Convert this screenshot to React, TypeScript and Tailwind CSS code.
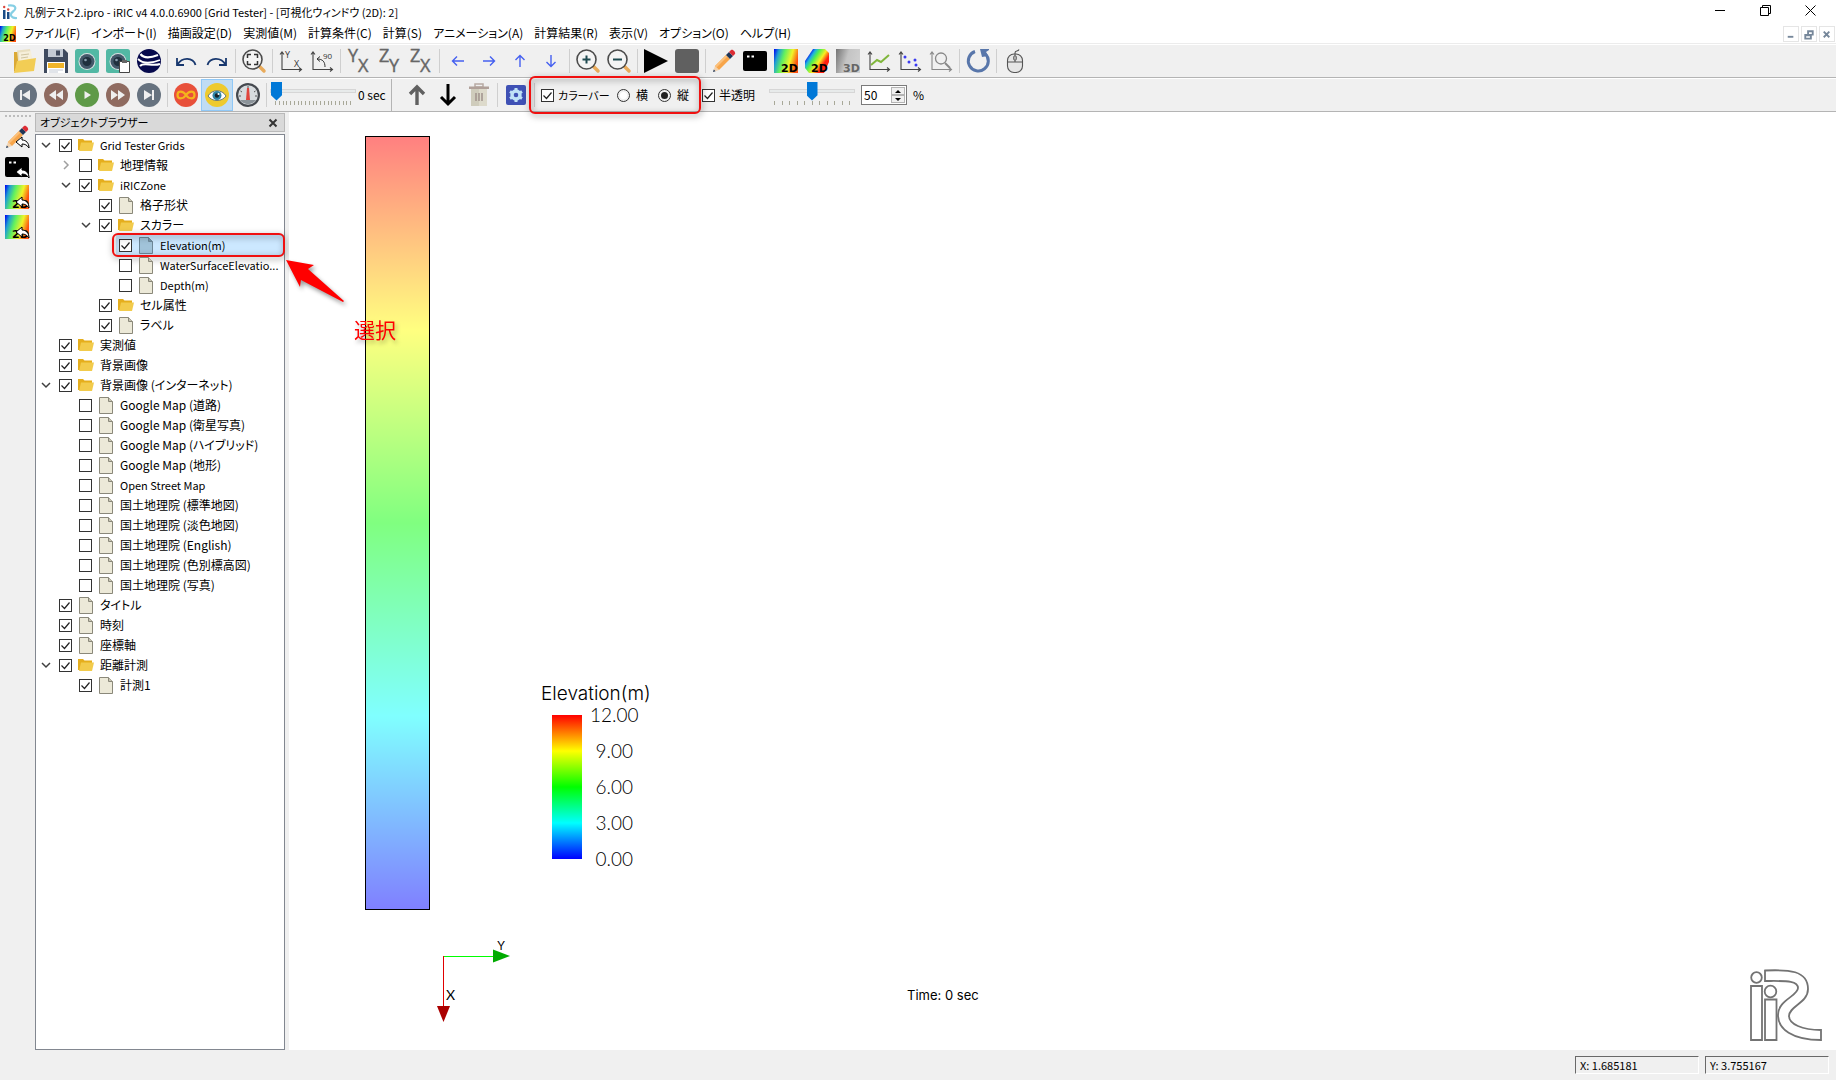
import React, { useState } from 'react';

type IconProps = { children: React.ReactNode; size?: string };

const Svg = ({ children, size = 'size-6' }: IconProps) => (
  <svg viewBox="0 0 24 24" className={`${size} shrink-0 overflow-visible`} aria-hidden="true">
    {children}
  </svg>
);

/* ---------- Icons ---------- */

const FolderBig = () => (
  <Svg>
    <path d="M1 3h6l1 2v17H1z" fill="#dba935" />
    <path d="M4 1.500 17 0l3 18-14 3z" fill="#e9dfc0" />
    <path d="M6 3.500 18 2l2 17-13 2z" fill="#f6efda" />
    <path d="M8 6l8-1M8 9l7-1" stroke="#cfc4a0" strokeWidth="1" />
    <path d="M4 12 23 9l-2 13L1 24z" fill="#f2cd55" />
    <path d="M4 12 1 24 1 22z" fill="#e0b03a" />
  </Svg>
);

const SaveIcon = () => (
  <Svg>
    <path d="M0 0h20l4 4v20H0z" fill="#3f4a5e" />
    <path d="M4 0h15v8H4z" fill="#c3cad4" />
    <path d="M12 1.500h4v5h-4z" fill="#3f4a5e" />
    <path d="M3 13h18v11H3z" fill="#fff" />
    <path d="M4 14h16v5H4z" fill="#f0b429" />
    <path d="M5 21h14M5 23h9" stroke="#c3cad4" />
  </Svg>
);

const CameraBody = () => (
  <>
    <rect width="24" height="24" rx="2.500" fill="#52b8a4" />
    <circle cx="12" cy="12.500" r="8.500" fill="#d9e0e2" />
    <circle cx="12" cy="12.500" r="7.500" fill="#44586a" />
    <circle cx="12" cy="12.500" r="4.500" fill="#20303e" />
    <circle cx="10.500" cy="11" r="1.300" fill="#8ba0b0" />
  </>
);

const CameraIcon = () => (
  <Svg>
    <CameraBody />
  </Svg>
);

const CameraClipIcon = () => (
  <Svg>
    <CameraBody />
    <path d="M13.500 12.500h10v11h-10z" fill="#fff" stroke="#454545" />
    <path d="M16 11h5v3h-5z" fill="#666" />
  </Svg>
);

const GlobeIcon = () => (
  <Svg>
    <circle cx="12" cy="12" r="12" fill="#070a4d" />
    <g fill="none" stroke="#fff">
      <path d="M3.500 5C6 8.500 12 9.500 21 6" strokeWidth="2.200" />
      <path d="M1 10c5 5 12 5 22 1" strokeWidth="1.800" />
      <path d="M3 17c4-4.500 12 1 20-2" strokeWidth="2" />
    </g>
  </Svg>
);

const UndoIcon = () => (
  <Svg>
    <path d="M3 9v7h7M3.500 15.500C8 8 19 8 21.500 16" fill="none" stroke="#17376e" strokeWidth="1.800" />
  </Svg>
);

const RedoIcon = () => (
  <Svg>
    <path d="M21 9v7h-7M20.500 15.500C16 8 5 8 2.500 16" fill="none" stroke="#17376e" strokeWidth="1.800" />
  </Svg>
);

const Lens = ({ children }: { children: React.ReactNode }) => (
  <Svg>
    <path d="M17 17l5 5" stroke="#e9ab5b" strokeWidth="3.500" strokeLinecap="round" />
    <circle cx="10.500" cy="10.500" r="9.500" fill="#f4f4f4" stroke="#4c4c4c" strokeWidth="1.600" />
    {children}
  </Svg>
);

const ZoomFitIcon = () => (
  <Lens>
    <path d="M5.500 9V5.500H9M12 5.500h3.500V9M15.500 12v3.500H12M9 15.500H5.500V12" fill="none" stroke="#333" strokeWidth="1.500" />
  </Lens>
);

const ZoomInIcon = () => (
  <Lens>
    <path d="M6.500 10.500h8M10.500 6.500v8" stroke="#1f4a50" strokeWidth="2" />
  </Lens>
);

const ZoomOutIcon = () => (
  <Lens>
    <path d="M6 10.500h9" stroke="#1f4a50" strokeWidth="2" />
  </Lens>
);

const AxisLines = ({ color = '#444' }: { color?: string }) => (
  <path d="M3 3v17.500h19M1 5.500 3 3l2 2.500M20 18.500l2.500 2-2.500 2" fill="none" stroke={color} strokeWidth="1.100" />
);

const AxisXYIcon = () => (
  <Svg>
    <AxisLines />
    <text x="6" y="9" fontSize="9" fill="#333" fontFamily="Open Sans">Y</text>
    <text x="15" y="18" fontSize="9" fill="#333" fontFamily="Open Sans">X</text>
  </Svg>
);

const AxisRotateIcon = () => (
  <Svg>
    <AxisLines />
    <path d="M15 18c0-5-2-8-8-8M10 7.500 7 10l3 2.500" fill="none" stroke="#333" />
    <text x="13" y="10" fontSize="8" fill="#333" fontFamily="Open Sans">90</text>
  </Svg>
);

const PlaneIcon = ({ a, b }: { a: string; b: string }) => (
  <Svg>
    <g fontSize="18" fill="#666" stroke="#666" strokeWidth=".4" fontFamily="Open Sans">
      <text x="1" y="13">{a}</text>
      <text x="11" y="23">{b}</text>
    </g>
  </Svg>
);

const MoveIcon = ({ d }: { d: string }) => (
  <Svg>
    <path d={d} fill="none" stroke="#4560f0" strokeWidth="1.400" />
  </Svg>
);

const PlayBlack = () => (
  <Svg>
    <path d="M0 0 24 12 0 24z" />
  </Svg>
);

const StopGray = () => (
  <Svg>
    <rect width="24" height="24" rx="3" fill="#606060" />
  </Svg>
);

const PencilShape = () => (
  <>
    <path d="M1 23 3 17l4 4z" fill="#f3d2ad" />
    <path d="M1 23l.8-2.500 1.700 1.700z" fill="#1f3a5f" />
    <path d="M3 17 14 6l4 4L7 21z" fill="#f7a54a" />
    <path d="M3 17 14 6l1.500 1.500-11 11z" fill="#fbc07a" />
    <path d="M14 6l3-3 4 4-3 3z" fill="#1f3556" />
    <path d="M17 3l2-2c1.500-1.500 5 2 4 4l-2 2z" fill="#dc2c34" />
  </>
);

const ConsoleShape = () => (
  <>
    <rect y="2" width="24" height="20" rx="2" fill="#000" />
    <path d="M4 6.500h2.500v2H4zM8.500 6.500H11v2H8.500z" fill="#fff" />
  </>
);

const BackArrow = () => (
  <path d="M11 17l6-5v3c4 0 7 3 7 8-2-3-4-4-7-4v3z" fill="#fff" stroke="#000" strokeWidth="1" />
);

const RainbowShape = ({ id, gray }: { id: string; gray?: boolean }) => (
  <>
    <defs>
      <linearGradient id={id} x1="0" y1="0.100" x2="1" y2="0.400">
        {gray ? (
          <>
            <stop offset="0" stopColor="#777" />
            <stop offset=".5" stopColor="#c4c4c4" />
            <stop offset="1" stopColor="#cfcfcf" />
          </>
        ) : (
          <>
            <stop offset="0" stopColor="#0010f0" />
            <stop offset=".18" stopColor="#20a0d0" />
            <stop offset=".42" stopColor="#60f060" />
            <stop offset=".72" stopColor="#f0f428" />
            <stop offset="1" stopColor="#ff5010" />
          </>
        )}
      </linearGradient>
    </defs>
    <path d="M0 0h24v24H0z" fill={`url(#${id})`} />
  </>
);

const TagText = ({ children, x = 7, fill = '#000' }: { children: string; x?: number; fill?: string }) => (
  <text x={x} y="23" fontSize="11" fontWeight="bold" fill={fill} fontFamily="DejaVu Sans">{children}</text>
);

const Map2DIcon = ({ id }: { id: string }) => (
  <Svg>
    <RainbowShape id={id} />
    <TagText>2D</TagText>
  </Svg>
);

const Cross2DIcon = () => (
  <Svg>
    <defs>
      <linearGradient id="cross2d" x1="0" y1="0" x2=".9" y2=".6">
        <stop offset=".2" stopColor="#0000f0" />
        <stop offset=".36" stopColor="#20b0e0" />
        <stop offset=".5" stopColor="#50f050" />
        <stop offset=".72" stopColor="#f8f020" />
        <stop offset=".92" stopColor="#ff2010" />
      </linearGradient>
    </defs>
    <path d="M8 0h12l4 4v9l-5 11H4l-4-5v-7z" fill="url(#cross2d)" />
    <TagText x={6}>2D</TagText>
  </Svg>
);

const Map3DIcon = () => (
  <Svg>
    <RainbowShape id="map3d" gray />
    <TagText fill="#666">3D</TagText>
  </Svg>
);

const LineChartIcon = () => (
  <Svg>
    <AxisLines />
    <path d="M4 16l6-5 4 2 8-7" fill="none" stroke="#80b63c" strokeWidth="2" />
  </Svg>
);

const ScatterIcon = () => (
  <Svg>
    <AxisLines />
    <g fill="#3a3af0">
      <circle cx="7" cy="8" r="1.500" />
      <circle cx="11" cy="13" r="1.500" />
      <circle cx="17" cy="11" r="1.500" />
      <circle cx="18" cy="16" r="1.500" />
    </g>
  </Svg>
);

const GraphLensIcon = () => (
  <Svg>
    <AxisLines color="#888" />
    <circle cx="12" cy="9.500" r="5.500" fill="none" stroke="#888" strokeWidth="1.300" />
    <path d="M16 14l5 5" stroke="#888" strokeWidth="2" />
  </Svg>
);

const RefreshIcon = () => (
  <Svg>
    <path d="M9 2.500A10 10 0 1 0 19 4.500" fill="none" stroke="#5876aa" strokeWidth="3" />
    <path d="M14 0h9v1l-3 2 2 4-6 1z" fill="#5876aa" />
  </Svg>
);

const MouseIcon = () => (
  <Svg>
    <rect x="4.500" y="5" width="15" height="18.500" rx="6.500" fill="#e6e6e6" stroke="#555" strokeWidth="1.100" />
    <path d="M4.500 13h15M12 13V4c0-3 3-1 4-3.500" fill="none" stroke="#555" strokeWidth="1.100" />
    <rect x="10.500" y="7" width="3" height="4" rx="1" fill="#aaa" stroke="#555" strokeWidth=".7" />
  </Svg>
);

const RoundIcon = ({ fill, d }: { fill: string; d: string }) => (
  <Svg>
    <circle cx="12" cy="12" r="12" fill={fill} />
    <path d={d} fill="#efefef" />
  </Svg>
);

const InfinityIcon = () => (
  <Svg>
    <circle cx="12" cy="12" r="12" fill="#e8503a" />
    <path d="M12 12c-3-4.500-8.500-4.500-8.500 0s5.500 4.500 8.500 0 8.500-4.500 8.500 0-5.500 4.500-8.500 0z" fill="none" stroke="#f5b51c" strokeWidth="2.200" />
  </Svg>
);

const EyeIcon = () => (
  <Svg>
    <circle cx="12" cy="12" r="12" fill="#eeca2e" />
    <path d="M3 13c4-7 14-7 18 0-4 6-14 6-18 0z" fill="#fff" stroke="#46606e" strokeWidth=".8" />
    <circle cx="12" cy="12.500" r="4.500" fill="#2f84a6" />
    <circle cx="12" cy="12.500" r="2.200" fill="#16242c" />
    <circle cx="13.500" cy="11" r="1" fill="#fff" />
  </Svg>
);

const GaugeIcon = () => (
  <Svg>
    <circle cx="12" cy="12" r="12" fill="#45494f" />
    <circle cx="12" cy="12" r="9.800" fill="#d7dbde" />
    <path d="M4 17a9.800 9.800 0 0 0 16 0z" fill="#8b9399" />
    <path d="M12 3v2M4.500 8l1.500 1M19.500 8 18 9M3 13h2M19 13h2" stroke="#555" />
    <path d="M11 5h2l1 12h-4z" fill="#e0443c" />
  </Svg>
);

const UpArrowIcon = () => (
  <Svg>
    <path d="M12 22V4M5 11l7-7 7 7" fill="none" stroke="#606060" strokeWidth="3.400" />
  </Svg>
);

const DownArrowIcon = () => (
  <Svg>
    <path d="M12 1v19M5 14l7 7 7-7" fill="none" stroke="#000" strokeWidth="3" />
  </Svg>
);

const TrashIcon = () => (
  <Svg>
    <path d="M8 1h8v3H8z" fill="none" stroke="#b7a9a2" strokeWidth="1.500" />
    <path d="M4 5h16v18H4z" fill="#cfccbc" />
    <path d="M12 5h8v18h-8z" fill="#dddacb" />
    <path d="M2 3.500h20V6H2z" fill="#b0a099" />
    <path d="M9 10v8M12 10v8M15 10v8" stroke="#a39690" strokeWidth="1.600" />
  </Svg>
);

const GearIcon = () => (
  <Svg>
    <rect x="2" y="2" width="20" height="20" rx="2" fill="#3f51b5" />
    <circle cx="12" cy="12" r="4" fill="none" stroke="#bfe2f7" strokeWidth="3.400" />
    <path d="M12 5v3M12 16v3M6 8.500l2.500 1.500M15.500 14l2.500 1.500M18 8.500 15.500 10M8.500 14 6 15.500" stroke="#bfe2f7" strokeWidth="3" />
  </Svg>
);

const TreeFolder = () => (
  <svg viewBox="0 0 16 14" className="h-3.5 w-4 shrink-0" aria-hidden="true">
    <path d="M0 1h5l1.500 1.500H14V12H0z" fill="#e5ae1d" />
    <path d="M3 4.500h13L14 13H1z" fill="#f2cb4c" />
  </svg>
);

const TreeFile = ({ selected }: { selected?: boolean }) => (
  <svg viewBox="0 0 16 17" className="h-[17px] w-4 shrink-0" aria-hidden="true">
    <path
      d="M1.500.500h9l4 4v12h-13z"
      fill={selected ? '#a1c3d9' : '#ece9d8'}
      stroke={selected ? '#6d8798' : '#8a887a'}
    />
    <path d="M10.500.500v4h4" fill={selected ? '#7797ab' : '#c9c6b4'} stroke={selected ? '#6d8798' : '#8a887a'} />
  </svg>
);

/* ---------- Small controls ---------- */

const CheckBox = ({ checked }: { checked?: boolean }) => (
  <span className="grid shrink-0 place-items-center">
    <input
      type="checkbox"
      defaultChecked={checked}
      className="peer size-[13px] appearance-none border border-[#333] bg-white [grid-area:1/1]"
    />
    <svg viewBox="0 0 13 13" className="pointer-events-none invisible size-[13px] [grid-area:1/1] peer-checked:visible" aria-hidden="true">
      <path d="M2.500 6.500l3 3 5-6" fill="none" stroke="#222" strokeWidth="1.200" />
    </svg>
  </span>
);

const Radio = ({ checked }: { checked?: boolean }) => (
  <input
    type="radio"
    name="orientation"
    defaultChecked={checked}
    className="size-[13px] shrink-0 appearance-none rounded-full border border-[#333] bg-white bg-clip-content p-0.5 checked:bg-[#222]"
  />
);

const Slider = ({ label, value, ticks }: { label: string; value: number; ticks: number }) => {
  const [current, setCurrent] = useState(value);
  return (
    <div className="flex h-7 w-[86px] flex-col gap-px">
      <input
        type="range"
        aria-label={label}
        value={current}
        onChange={(e) => setCurrent(Number(e.target.value))}
        className="h-[19px] w-full appearance-none bg-transparent [&::-webkit-slider-runnable-track]:h-1 [&::-webkit-slider-runnable-track]:border [&::-webkit-slider-runnable-track]:border-[#d6d6d6] [&::-webkit-slider-runnable-track]:bg-[#e7eaea] [&::-webkit-slider-thumb]:mt-[-8px] [&::-webkit-slider-thumb]:h-[19px] [&::-webkit-slider-thumb]:w-[11px] [&::-webkit-slider-thumb]:appearance-none [&::-webkit-slider-thumb]:bg-[#0078d7] [&::-webkit-slider-thumb]:[clip-path:polygon(0_0,100%_0,100%_72%,50%_100%,0_72%)]"
      />
      <div className="flex h-1 justify-between px-[5px]">
        {Array.from({ length: ticks }, (_, i) => (
          <span key={i} className="w-px bg-[#a8a898]" />
        ))}
      </div>
    </div>
  );
};

const Handle = () => (
  <span className="h-[26px] w-0.5 shrink-0 bg-[repeating-linear-gradient(#bdbdbd_0_2px,transparent_2px_4px)]" />
);

const Sep = () => <span className="h-6 w-px shrink-0 bg-[#cfcfcf]" />;

type Tool = { name: string; icon: React.ReactNode; active?: boolean };

const ToolGroup = ({ tools }: { tools: Tool[] }) => (
  <div className="flex gap-[7px]">
    {tools.map((tool) => (
      <button
        key={tool.name}
        type="button"
        aria-label={tool.name}
        className={tool.active ? 'bg-[#c0dcf3] outline outline-[3px] outline-[#c0dcf3] ring-4 ring-[#90c8f6]' : ''}
      >
        {tool.icon}
      </button>
    ))}
  </div>
);

/* ---------- Data ---------- */

const MENUS = [
  'ファイル(F)',
  'インポート(I)',
  '描画設定(D)',
  '実測値(M)',
  '計算条件(C)',
  '計算(S)',
  'アニメーション(A)',
  '計算結果(R)',
  '表示(V)',
  'オプション(O)',
  'ヘルプ(H)',
];

const MAIN_TOOLS: Tool[][] = [
  [
    { name: 'Open', icon: <FolderBig /> },
    { name: 'Save', icon: <SaveIcon /> },
    { name: 'Snapshot', icon: <CameraIcon /> },
    { name: 'Copy snapshot', icon: <CameraClipIcon /> },
    { name: 'Google Earth', icon: <GlobeIcon /> },
  ],
  [
    { name: 'Undo', icon: <UndoIcon /> },
    { name: 'Redo', icon: <RedoIcon /> },
  ],
  [{ name: 'Fit', icon: <ZoomFitIcon /> }],
  [
    { name: 'Reset rotation', icon: <AxisXYIcon /> },
    { name: 'Rotate 90', icon: <AxisRotateIcon /> },
  ],
  [
    { name: 'XY plane', icon: <PlaneIcon a="Y" b="X" /> },
    { name: 'YZ plane', icon: <PlaneIcon a="Z" b="Y" /> },
    { name: 'XZ plane', icon: <PlaneIcon a="Z" b="X" /> },
  ],
  [
    { name: 'Move left', icon: <MoveIcon d="M18 12H6.500M11 7.500 6.500 12l4.500 4.500" /> },
    { name: 'Move right', icon: <MoveIcon d="M6 12h11.500M13 7.500l4.500 4.500-4.500 4.500" /> },
    { name: 'Move up', icon: <MoveIcon d="M12 18V6.500M7.500 11 12 6.500l4.500 4.500" /> },
    { name: 'Move down', icon: <MoveIcon d="M12 6v11.500M7.500 13l4.500 4.500 4.500-4.500" /> },
  ],
  [
    { name: 'Zoom in', icon: <ZoomInIcon /> },
    { name: 'Zoom out', icon: <ZoomOutIcon /> },
  ],
  [
    { name: 'Run', icon: <PlayBlack /> },
    { name: 'Stop', icon: <StopGray /> },
  ],
  [
    { name: 'Pre-processing', icon: <Svg><PencilShape /></Svg> },
    { name: 'Solver console', icon: <Svg><ConsoleShape /></Svg> },
    { name: '2D window', icon: <Map2DIcon id="map2d" /> },
    { name: '2D bird eye', icon: <Cross2DIcon /> },
    { name: '3D window', icon: <Map3DIcon /> },
    { name: 'Graph', icon: <LineChartIcon /> },
    { name: 'Scatter', icon: <ScatterIcon /> },
    { name: 'Verification', icon: <GraphLensIcon /> },
  ],
  [{ name: 'Reload', icon: <RefreshIcon /> }],
  [{ name: 'Mouse hints', icon: <MouseIcon /> }],
];

const PLAY_TOOLS: Tool[] = [
  { name: 'First', icon: <RoundIcon fill="#66727f" d="M7 7h2v10H7zM17 7v10l-8-5z" /> },
  { name: 'Rewind', icon: <RoundIcon fill="#8f6b60" d="M12 7v10l-7-5zM19 7v10l-7-5z" /> },
  { name: 'Play', icon: <RoundIcon fill="#5f9a48" d="M9.500 8v8l6.500-4z" /> },
  { name: 'Forward', icon: <RoundIcon fill="#8f6b60" d="M12 7v10l7-5zM5 7v10l7-5z" /> },
  { name: 'Last', icon: <RoundIcon fill="#66727f" d="M15 7h2v10h-2zM7 7v10l8-5z" /> },
];

const VIEW_TOOLS: Tool[] = [
  { name: 'Loop', icon: <InfinityIcon /> },
  { name: 'Follow', icon: <EyeIcon />, active: true },
  { name: 'Speed', icon: <GaugeIcon /> },
];

const ORDER_TOOLS: Tool[] = [
  { name: 'Up', icon: <UpArrowIcon /> },
  { name: 'Down', icon: <DownArrowIcon /> },
  { name: 'Delete', icon: <TrashIcon /> },
];

const SIDE_TOOLS: Tool[] = [
  { name: 'Focus pre-processing', icon: <Svg><PencilShape /><BackArrow /></Svg> },
  { name: 'Focus console', icon: <Svg><ConsoleShape /><BackArrow /></Svg> },
  { name: 'Focus window 1', icon: <Svg><RainbowShape id="side1" /><TagText>2D</TagText><BackArrow /></Svg> },
  { name: 'Focus window 2', icon: <Svg><RainbowShape id="side2" /><TagText>2D</TagText><BackArrow /></Svg> },
];

interface TreeItem {
  label: string;
  level: number;
  checked?: boolean;
  folder?: boolean;
  open?: boolean;
  selected?: boolean;
}

const TREE: TreeItem[] = [
  { label: 'Grid Tester Grids', level: 0, checked: true, folder: true, open: true },
  { label: '地理情報', level: 1, folder: true, open: false },
  { label: 'iRICZone', level: 1, checked: true, folder: true, open: true },
  { label: '格子形状', level: 2, checked: true },
  { label: 'スカラー', level: 2, checked: true, folder: true, open: true },
  { label: 'Elevation(m)', level: 3, checked: true, selected: true },
  { label: 'WaterSurfaceElevatio...', level: 3 },
  { label: 'Depth(m)', level: 3 },
  { label: 'セル属性', level: 2, checked: true, folder: true },
  { label: 'ラベル', level: 2, checked: true },
  { label: '実測値', level: 0, checked: true, folder: true },
  { label: '背景画像', level: 0, checked: true, folder: true },
  { label: '背景画像 (インターネット)', level: 0, checked: true, folder: true, open: true },
  { label: 'Google Map (道路)', level: 1 },
  { label: 'Google Map (衛星写真)', level: 1 },
  { label: 'Google Map (ハイブリッド)', level: 1 },
  { label: 'Google Map (地形)', level: 1 },
  { label: 'Open Street Map', level: 1 },
  { label: '国土地理院 (標準地図)', level: 1 },
  { label: '国土地理院 (淡色地図)', level: 1 },
  { label: '国土地理院 (English)', level: 1 },
  { label: '国土地理院 (色別標高図)', level: 1 },
  { label: '国土地理院 (写真)', level: 1 },
  { label: 'タイトル', level: 0, checked: true },
  { label: '時刻', level: 0, checked: true },
  { label: '座標軸', level: 0, checked: true },
  { label: '距離計測', level: 0, checked: true, folder: true, open: true },
  { label: '計測1', level: 1, checked: true },
];

const LEVEL_PAD = ['pl-0', 'pl-5', 'pl-10', 'pl-15'];

// latin-only labels run a size smaller than the ones with kanji
const isLatin = (text: string) => /^[\x20-\x7e]+$/.test(text);

/* ---------- Layout parts ---------- */

const TitleBar = () => (
  <header className="flex h-6 items-center bg-white pl-0.5">
    <svg viewBox="0 0 16 16" className="size-4" aria-hidden="true">
      <path d="M1 6h2.500v9H1zM5 8h2.500v7H5z" fill="#1c4c86" />
      <circle cx="2.200" cy="3" r="1.200" fill="#d9473c" />
      <circle cx="6.200" cy="5.500" r="1.200" fill="#d9473c" />
      <path d="M6 1.500c8-1 9 3 5 6s-2 7 4 6.500" fill="none" stroke="#86cfe4" strokeWidth="2.200" />
    </svg>
    <h1 className="ml-1.5 text-[11px]">凡例テスト2.ipro - iRIC v4 4.0.0.6900 [Grid Tester] - [可視化ウィンドウ (2D): 2]</h1>
    <div className="ml-auto flex gap-[34px] pr-5 pb-1">
      <button type="button" aria-label="Minimize">
        <svg viewBox="0 0 11 11" className="size-[11px]"><path d="M0 5.500h10" stroke="#000" /></svg>
      </button>
      <button type="button" aria-label="Restore">
        <svg viewBox="0 0 11 11" className="size-[11px]"><path d="M.5 2.500h8v8h-8zM2.500 2.500v-2h8v8h-2" fill="none" stroke="#000" /></svg>
      </button>
      <button type="button" aria-label="Close">
        <svg viewBox="0 0 11 11" className="size-[11px]"><path d="M.5.500l10 10M10.500.500l-10 10" stroke="#000" /></svg>
      </button>
    </div>
  </header>
);

const MenuBar = () => (
  <nav className="flex h-[19px] items-center bg-white">
    <svg viewBox="0 0 24 24" className="size-4" aria-hidden="true">
      <RainbowShape id="menu2d" />
      <text x="5" y="22" fontSize="12" fontWeight="bold" fontFamily="DejaVu Sans">2D</text>
    </svg>
    <div className="ml-2 flex gap-[11px] pb-0.5">
      {MENUS.map((menu) => (
        <button key={menu} type="button" className="whitespace-nowrap text-xs">{menu}</button>
      ))}
    </div>
    <div className="ml-auto flex gap-0.5 pr-px">
      {['M4 10.500h6', 'M3.500 8.500h6v4h-6zM3.500 9h6M6.500 8V4.500h5V9', 'M4 5l6 6M10 5l-6 6'].map((d, i) => (
        <button key={d} type="button" aria-label={['Minimize child', 'Restore child', 'Close child'][i]} className="border border-[#e5e5e5]">
          <svg viewBox="0 0 15 15" className="size-[14px]"><path d={d} fill="none" stroke="#76879a" strokeWidth="2" /></svg>
        </button>
      ))}
    </div>
  </nav>
);

const Callout = ({ className }: { className: string }) => (
  <span className={`pointer-events-none absolute rounded-md border-2 border-[#f01010] drop-shadow-[1px_2px_3px_rgba(0,0,0,0.5)] ${className}`} />
);

const PlaybackBar = () => (
  <div className="flex h-[34px] items-center border-y border-t-white border-b-[#b4b4b4]">
    <div className="flex h-full w-[392px] items-center border-r border-[#b4b4b4] pl-1">
      <span className="w-[9px]"><Handle /></span>
      <div className="flex items-center gap-1.5">
        <ToolGroup tools={PLAY_TOOLS} />
        <Sep />
        <ToolGroup tools={VIEW_TOOLS} />
        <Sep />
      </div>
      <div className="flex items-center gap-0.5 pl-[3px]">
        <Slider label="Time step" value={0} ticks={21} />
        <span className="whitespace-nowrap text-xs">0 sec</span>
      </div>
    </div>
    <div className="flex items-center gap-1.5 pl-1">
      <span className="w-[3px]"><Handle /></span>
      <ToolGroup tools={ORDER_TOOLS} />
      <Sep />
      <ToolGroup tools={[{ name: 'Color settings', icon: <GearIcon /> }]} />
      <Sep />
      <div className="relative z-10 flex items-center whitespace-nowrap text-xs">
        <label className="flex w-[76px] items-center gap-1 text-[11px]"><CheckBox checked />カラーバー</label>
        <label className="flex w-[41px] items-center gap-1.5"><Radio />横</label>
        <label className="flex w-11 items-center gap-1.5"><Radio checked />縦</label>
        <label className="flex w-[67px] items-center gap-1"><CheckBox checked />半透明</label>
        <Callout className="top-1/2 -left-3 h-[38px] w-[172px] -translate-y-1/2" />
      </div>
    </div>
    <div className="flex items-center gap-1.5 text-xs">
      <Slider label="Opacity" value={50} ticks={11} />
      <div className="flex h-5 w-[46px] items-center border border-[#7a7a7a] bg-white">
        <input type="text" aria-label="Opacity percent" defaultValue="50" className="w-[29px] pl-0.5 outline-none" />
        <span className="flex w-[14px] flex-col">
          {['M3 5 6 2l3 3z', 'M3 2l3 3 3-3z'].map((d, i) => (
            <button key={d} type="button" aria-label={i ? 'Decrease' : 'Increase'} className="flex h-2 items-center justify-center border border-[#b4b4b4] bg-[#f0f0f0]">
              <svg viewBox="0 0 12 7" className="h-[7px] w-3 shrink-0"><path d={d} /></svg>
            </button>
          ))}
        </span>
      </div>
      <span>%</span>
    </div>
  </div>
);

const TreeRow = ({ item }: { item: TreeItem }) => (
  <li className={`flex h-5 items-center ${LEVEL_PAD[item.level]}`}>
    <span className="flex w-5 shrink-0 justify-center">
      {item.open !== undefined && (
        <svg viewBox="0 0 10 10" className="size-2.5" aria-hidden="true">
          <path
            d={item.open ? 'M1 3l4 4 4-4' : 'M3 1l4 4-4 4'}
            fill="none"
            stroke={item.open ? '#404040' : '#a0a0a0'}
            strokeWidth="1.500"
          />
        </svg>
      )}
    </span>
    <label className={`relative flex h-full grow items-center pl-[3px] ${item.selected ? 'bg-[#cce8ff]' : ''}`}>
      <CheckBox checked={item.checked} />
      <span className="flex w-7 shrink-0 justify-center pr-px">
        {item.folder ? <TreeFolder /> : <TreeFile selected={item.selected} />}
      </span>
      <span className={`whitespace-nowrap ${isLatin(item.label) ? 'text-[11px]' : 'text-xs'}`}>{item.label}</span>
      {item.selected && <Callout className="-top-0.5 -left-1 h-6 w-[173px]" />}
    </label>
  </li>
);

const ObjectBrowser = () => (
  <aside className="mt-px mr-1 flex w-[250px] shrink-0 flex-col gap-0.5">
    <div className="flex h-[19px] items-center justify-between border border-[#b9b9b9] bg-[#d9d9d9] pr-1.5 pl-1">
      <h2 className="text-[11px]">オブジェクトブラウザー</h2>
      <button type="button" aria-label="Close panel">
        <svg viewBox="0 0 10 10" className="size-2.5"><path d="M1.500 1.500l7 7M8.500 1.500l-7 7" stroke="#333" strokeWidth="2" /></svg>
      </button>
    </div>
    <ul className="grow border border-[#828790] bg-white">
      {TREE.map((item) => <TreeRow key={item.label} item={item} />)}
    </ul>
  </aside>
);

const Viewport = () => (
  <main className="relative grow bg-white">
    {/* grid mesh coloured by elevation */}
    <div className="absolute top-6 left-[76px] h-[774px] w-[65px] border border-black bg-[linear-gradient(#ff8080,#ffff80_25%,#80ff80_50%,#80ffff_75%,#8080ff)]" />

    {/* annotation */}
    <svg viewBox="0 0 64 52" className="absolute top-[146px] -left-1 h-[52px] w-16 drop-shadow-[2px_3px_2px_rgba(0,0,0,0.4)]" aria-hidden="true">
      <path d="M1 2l28 5-6 4 36 32-1 1-42-22-1 7z" fill="#f00" />
    </svg>
    <p className="absolute top-[203px] left-[65px] text-[21px] leading-7 text-[#f00] drop-shadow-[2px_3px_2px_rgba(0,0,0,0.3)]">選択</p>

    {/* legend */}
    <div className="absolute top-[570px] left-[252px] text-[19px] font-light leading-6 text-black">
      <p className="font-[Inter]">Elevation(m)</p>
      <div className="flex gap-2 pt-[9px] pl-[11px] font-[Lato]">
        <div className="h-36 w-[30px] bg-[linear-gradient(#f00,#ff0_25%,#0f0_50%,#0ff_75%,#00f)]" />
        <ul className="-my-3 flex flex-col justify-between text-center">
          {['12.00', '9.00', '6.00', '3.00', '0.00'].map((v) => <li key={v}>{v}</li>)}
        </ul>
      </div>
    </div>

    {/* axes */}
    <svg viewBox="0 0 80 84" className="absolute top-[828px] left-[146px] h-[84px] w-20" aria-hidden="true">
      <path d="M8.500 16.500H59" stroke="#00ff00" />
      <path d="M8.500 16v50" stroke="#e00000" />
      <path d="M58 9.500v13l17-6.500z" fill="#00ab00" />
      <path d="M2 66h13L8.500 82z" fill="#ab0000" />
      <text x="62" y="10" fontSize="12" fontFamily="Inter">Y</text>
      <text x="11" y="60" fontSize="14" fontFamily="Lato">X</text>
    </svg>

    <p className="absolute top-[873px] left-[618px] font-[Inter] text-[13px] leading-5">Time: 0 sec</p>

    <svg viewBox="0 0 72 72" className="absolute right-3.5 bottom-[9px] size-[72px]" fill="#fff" stroke="#737373" strokeWidth="1.800" aria-hidden="true">
      <circle cx="6.500" cy="8.500" r="5.300" />
      <path d="M1 17h11v54H1z" />
      <circle cx="20.500" cy="22.500" r="5.800" />
      <path d="M15 30.500h11.500V71H15z" />
      <path d="M15 1.500C38 .500 58 1 58 20c0 14-19 17-19 27 0 8 13 14 32 14v10c-29 0-43-11-43-25 0-15 20-19 20-27 0-8-13-7-33-7z" />
    </svg>
  </main>
);

const StatusBar = () => (
  <footer className="flex h-[30px] items-center justify-end gap-1.5 pr-[7px] text-xs">
    {['X: 1.685181', 'Y: 3.755167'].map((text) => (
      <output
        key={text}
        className="flex h-[18px] w-31 items-center border border-t-[#696969] border-r-white border-b-white border-l-[#696969] pl-1 text-[11px]"
      >
        {text}
      </output>
    ))}
  </footer>
);

const App: React.FC = () => (
  <div className="flex min-h-screen flex-col bg-[#f0f0f0] font-['Noto_Sans_CJK_JP',sans-serif] text-black [font-feature-settings:'palt']">
    <TitleBar />
    <MenuBar />
    <div className="border-t border-[#ececec] bg-[#f0f0f0]">
      <div className="flex h-[34px] items-center gap-1.5 border-t border-b border-t-white border-b-[#b4b4b4] pl-1">
        <span className="w-[3px]"><Handle /></span>
        {MAIN_TOOLS.map((tools, i) => (
          <React.Fragment key={tools[0].name}>
            {i > 0 && <Sep />}
            <ToolGroup tools={tools} />
          </React.Fragment>
        ))}
      </div>
      <PlaybackBar />
    </div>
    <div className="flex grow">
      <div className="flex w-[35px] shrink-0 flex-col gap-1.5 pt-[3px] pl-[5px]">
        <span className="mb-0.5 h-0.5 w-[26px] bg-[repeating-linear-gradient(90deg,#bdbdbd_0_2px,transparent_2px_4px)]" />
        {SIDE_TOOLS.map((tool) => (
          <button key={tool.name} type="button" aria-label={tool.name} className="w-6">{tool.icon}</button>
        ))}
      </div>
      <ObjectBrowser />
      <Viewport />
    </div>
    <StatusBar />
  </div>
);

export default App;
